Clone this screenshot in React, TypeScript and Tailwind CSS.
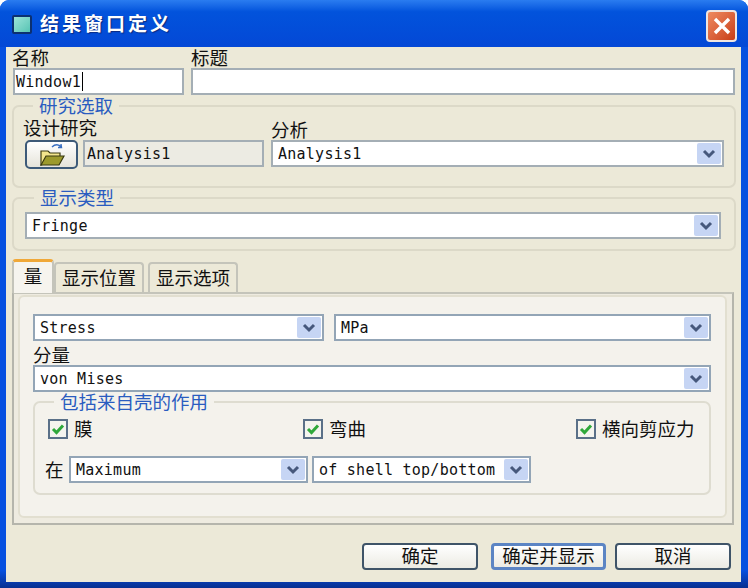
const mono = "font-['DejaVu_Sans_Mono','Liberation_Mono',monospace] text-[15px] tracking-[0.25px] text-[#111]";
const cjk = "font-['Noto_Sans_CJK_SC','Liberation_Sans',sans-serif] text-[18.5px] leading-[20px] text-[#111]";
const blue = "font-['Noto_Sans_CJK_SC','Liberation_Sans',sans-serif] text-[18.5px] leading-[19px] text-[#2a5cc0]";

function Chevron() {
  return (
    <svg width="14" height="10" viewBox="0 0 14 10" fill="none">
      <path d="M2 2 L7 7 L12 2" stroke="#46587c" strokeWidth="3" />
    </svg>
  );
}

function Select({ value, className, tone = "border-[#a4aeb5]" }: { value: string; className: string; tone?: string }) {
  return (
    <div className={`flex items-center h-[27px] bg-white border-2 ${tone} pl-[5px] pr-[1px] ${className}`}>
      <span className={`flex-1 whitespace-nowrap overflow-hidden pt-[2px] ${mono}`}>{value}</span>
      <span className="flex items-center justify-center w-[24px] h-[21px] bg-[#c6d5f4] rounded-[2px]">
        <Chevron />
      </span>
    </div>
  );
}

function Group({ title, className, children, ml = "ml-[20px]" }: { title: string; className: string; children: React.ReactNode; ml?: string }) {
  return (
    <fieldset className={`border-2 border-[#dcd9c8] rounded-[7px] ${className}`}>
      <legend className={`${ml} px-[6px] ${blue}`}>{title}</legend>
      {children}
    </fieldset>
  );
}

function Check({ label, className }: { label: string; className: string }) {
  return (
    <div className={`flex items-center gap-[6px] ${className}`}>
      <span className="flex items-center justify-center w-[20px] h-[20px] bg-[#f4f4ee] border-2 border-[#5a7088]">
        <svg width="14" height="12" viewBox="0 0 14 12" fill="none">
          <path d="M2 6 L5.5 9.5 L12 2.5" stroke="#2fa83a" strokeWidth="3" />
        </svg>
      </span>
      <span className={`-mt-[2px] ${cjk}`}>{label}</span>
    </div>
  );
}

function Button({ label, className }: { label: string; className: string }) {
  return (
    <button className={`h-[27px] rounded-[4px] bg-gradient-to-b from-white to-[#ecebe3] flex items-center justify-center pb-[3px] ${cjk} ${className}`}>
      {label}
    </button>
  );
}

export default function App() {
  return (
    <div className="w-[748px] h-[588px] bg-white overflow-hidden">
      <div className="w-full h-full flex flex-col rounded-t-[9px] bg-gradient-to-b from-[#0650e0] via-[#0650e0] via-[97%] to-[#072f90] overflow-hidden">
        <div className="h-[47px] shrink-0 flex items-center pl-[12px] pr-[11px] bg-gradient-to-b from-[#2a7cf0] via-[#0253dc] via-[25%] to-[#0448d6]">
          <span className="w-[20px] h-[19px] bg-gradient-to-br from-[#9be4d8] to-[#55c4b4] border-2 border-[#0c3070] rounded-[2px] mt-[2px]" />
          <span className="ml-[8px] font-['Noto_Sans_CJK_SC',sans-serif] font-bold text-[19px] tracking-[3px] text-white [text-shadow:1px_1px_1px_#0a2a80]">结果窗口定义</span>
          <span className="ml-auto mt-[5px] w-[31px] h-[32px] flex items-center justify-center rounded-[4px] border-2 border-[#f0e6e0] bg-gradient-to-br from-[#ee8a60] to-[#c83c14]">
            <svg width="20" height="20" viewBox="0 0 20 20" fill="none">
              <path d="M3 3 L17 17 M17 3 L3 17" stroke="white" strokeWidth="3.4" />
            </svg>
          </span>
        </div>
        <div className="flex-1 flex mb-[6px] ml-[6px] mr-[7px]">
          <div className="flex-1 bg-[#ece9d8] flex flex-col pl-[6px] pr-[5px]">
            <div className="flex gap-[7px] pl-[1px] pr-[1px]">
              <div className="w-[171px] flex flex-col">
                <span className={`h-[21px] leading-[20px] ${cjk} ml-[-1px]`}>名称</span>
                <div className={`h-[27px] bg-white border-2 border-[#a4aeb5] flex items-center pl-[1px] ${mono}`}>
                  <span className="pt-[2px]">Window1</span><span className="w-[1px] h-[19px] bg-black ml-[1px]" />
                </div>
              </div>
              <div className="flex-1 flex flex-col">
                <span className={`h-[21px] leading-[20px] ${cjk}`}>标题</span>
                <div className="h-[27px] bg-white border-2 border-[#a4aeb5]" />
              </div>
            </div>

            <Group title="研究选取" className="mt-[1px] h-[92px]" ml="ml-[19px]">
              <div className={`flex pl-[9px] h-[25px] items-center ${cjk}`}>
                <span className="w-[248px] -mt-[1px]">设计研究</span>
                <span className="mt-[2px]">分析</span>
              </div>
              <div className="flex pl-[11px] pr-[10px]">
                <div className="w-[53px] h-[29px] rounded-[5px] border-2 border-[#3d5a78] bg-gradient-to-b from-white to-[#e6e4da] flex items-center justify-center">
                  <svg width="26" height="24" viewBox="0 0 26 24" fill="none">
                    <path d="M13 4 C16 1 20 1 22 4 M22 1 L22.5 4.5 L19 4.5" stroke="#3a6fc0" strokeWidth="1.4" />
                    <path d="M2 8 L9 8 L11 10 L21 10 L21 14 L2 22 Z" fill="#f2e58c" stroke="#3a3a10" strokeWidth="1.2" />
                    <path d="M2 22 L7 13 L25 13 L20 22 Z" fill="#9c9a2c" stroke="#3a3a10" strokeWidth="1.2" />
                  </svg>
                </div>
                <div className={`ml-[5px] w-[181px] h-[27px] bg-[#ecebe3] border-2 border-[#a4aeb5] pl-[2px] pt-[2px] flex items-center ${mono}`}>Analysis1</div>
                <Select value="Analysis1" className="ml-[7px] flex-1" />
              </div>
            </Group>

            <Group title="显示类型" className="h-[63px]">
              <div className="pl-[11px] pr-[13px] pt-[5px]">
                <Select value="Fringe" className="w-full" />
              </div>
            </Group>

            <div className="relative flex mt-[7px] h-[34px] items-end z-10">
              <div className={`w-[42px] h-[34px] -mb-[1px] bg-[#f6f4ee] border-x-2 border-[#c4c4ba] border-t-[3px] border-t-[#f0a838] rounded-t-[4px] flex justify-center pt-[3px] ${cjk}`}>量</div>
              <div className={`w-[90px] h-[30px] pb-[3px] bg-[#ece9d8] border-x-2 border-t-2 border-[#c4c4ba] rounded-t-[4px] flex items-center justify-center ${cjk}`}>显示位置</div>
              <div className={`ml-[4px] w-[90px] h-[30px] pb-[3px] bg-[#ece9d8] border-x-2 border-t-2 border-[#c4c4ba] rounded-t-[4px] flex items-center justify-center ${cjk}`}>显示选项</div>
            </div>
            <div className="w-[722px] h-[233px] border-2 border-[#b5b5ac] border-t-[#c4c4ba] pl-[4px] pr-[5px] pt-[1px] pb-[5px] bg-[#eeebe0]">
              <div className="h-full rounded-[6px] border-2 border-[#e2dfd0] bg-[#f4f2ec] pl-[13px] pr-[14px] pt-[17px]">
                <div className="flex gap-[10px]">
                  <Select value="Stress" className="w-[291px]" tone="border-[#93a5b6]" />
                  <Select value="MPa" className="flex-1" tone="border-[#93a5b6]" />
                </div>
                <div className={`h-[24px] flex items-center pt-[1px] ${cjk}`}>分量</div>
                <Select value="von Mises" className="w-full" tone="border-[#93a5b6]" />
                <Group title="包括来自壳的作用" className="h-[103px] border-[#dedcd0]" ml="ml-[19px]">
                  <div className="flex pl-[13px] pt-[8px] h-[44px]">
                    <Check label="膜" className="w-[255px] h-[20px]" />
                    <Check label="弯曲" className="w-[273px] h-[20px]" />
                    <Check label="横向剪应力" className="h-[20px]" />
                  </div>
                  <div className="flex items-center pl-[10px] mt-[1px]">
                    <span className={`w-[24px] -mt-[2px] ${cjk}`}>在</span>
                    <Select value="Maximum" className="w-[239px]" tone="border-[#93a5b6]" />
                    <Select value="of shell top/bottom" className="ml-[4px] w-[219px]" tone="border-[#93a5b6]" />
                  </div>
                </Group>
              </div>
            </div>
            <div className="flex justify-end pr-[5px] mt-[18px]">
              <Button label="确定" className="w-[116px] border-2 border-[#3f5468]" />
              <Button label="确定并显示" className="ml-[13px] w-[115px] border-[3px] border-[#5c85c4]" />
              <Button label="取消" className="ml-[9px] w-[116px] border-2 border-[#3f5468]" />
            </div>
          </div>
        </div>
      </div>
    </div>
  );
}
